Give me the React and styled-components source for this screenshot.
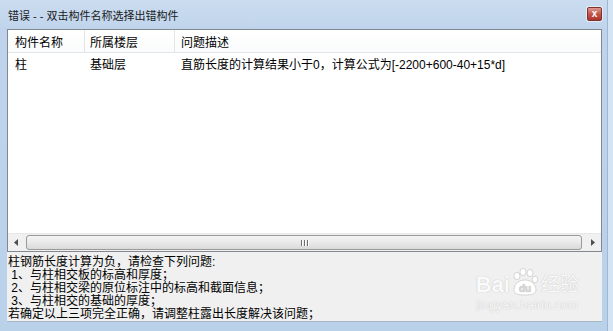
import React from "react";
import styled, { createGlobalStyle } from "styled-components";

const GlobalStyle = createGlobalStyle`
  html, body {
    margin: 0;
    padding: 0;
    background: #d4e4f4;
  }
  body {
    font-family: "Liberation Sans", "Noto Sans CJK SC", sans-serif;
    font-size: 12px;
    color: #000;
  }
`;

const StyledWindow = styled.div`
  position: relative;
  display: flex;
  flex-direction: column;

  width: 608px;
  height: 331px;
  box-sizing: border-box;
  padding: 0 5px 9px 7px;

  background: linear-gradient(180deg, #cbdcef 0%, #bfd4ec 30px, #bad1ea 100%);
  border-right: 1px solid #9fb7d2;
`;

const StyledTitleBar = styled.div`
  display: flex;
  align-items: center;
  justify-content: space-between;

  height: 29px;
  padding-left: 1px;
  flex-shrink: 0;
`;

const StyledTitle = styled.span`
  font-size: 11px;
  color: #1b1b1b;
  white-space: pre;
`;

const StyledClose = styled.div`
  display: flex;
  align-items: center;
  justify-content: center;

  width: 13px;
  height: 12px;
  margin-bottom: 2px;

  border: 1px solid #7d322c;
  border-radius: 2px;
  background: linear-gradient(180deg, #dc9a92 0%, #c4544b 50%, #ab352d 100%);
  box-shadow: 0 0 0 1px rgba(255, 255, 255, 0.5);
  color: #fff;
  font-size: 10px;
  font-weight: bold;
  line-height: 1;
`;

const StyledList = styled.div`
  display: flex;
  flex-direction: column;

  height: 223px;
  box-sizing: border-box;
  flex-shrink: 0;

  border: 1px solid #828790;
  background: #fff;
`;

const StyledRow = styled.div`
  display: grid;
  grid-template-columns: 77px 90px 1fr;
  align-items: center;

  height: ${(p) => (p.$header ? "22px" : "20px")};
  border-bottom: ${(p) => (p.$header ? "1px solid #e5e5e5" : "none")};
  background: ${(p) =>
    p.$header ? "linear-gradient(180deg, #ffffff 0%, #fafbfc 100%)" : "#fff"};
`;

const StyledCell = styled.div`
  height: 100%;
  display: flex;
  align-items: center;
  padding-left: ${(p) => p.$pad || 6}px;
  white-space: nowrap;
  border-right: ${(p) => (p.$divider ? "1px solid #e5e5e5" : "none")};
  font-size: 12px;
`;

const StyledSpacer = styled.div`
  flex: 1;
`;

const StyledScrollbar = styled.div`
  display: flex;
  align-items: center;

  height: 17px;
  background: #f0f0f0;
  border-top: 1px solid #e8e8e8;
`;

const StyledArrow = styled.div`
  display: flex;
  align-items: center;
  justify-content: center;
  width: 17px;
  height: 17px;
  flex-shrink: 0;
`;

const StyledThumb = styled.div`
  display: flex;
  align-items: center;
  justify-content: center;

  flex: 1;
  height: 15px;
  margin: 0 2px 0 1px;
  box-sizing: border-box;

  border: 1px solid #9a9a9a;
  border-radius: 3px;
  background: linear-gradient(180deg, #f4f4f4 0%, #e9e9e9 50%, #d9d9d9 100%);
`;

const StyledGrip = styled.div`
  display: flex;
  gap: 2px;

  span {
    width: 1px;
    height: 6px;
    background: #6f6f6f;
    box-shadow: 1px 0 0 #fff;
  }
`;

const StyledDetail = styled.div`
  flex: 1;
  box-sizing: border-box;
  padding: 4px 0 0 1px;

  background: #f0f0f0;
  border-bottom: 1px solid #a9b6c6;
  font-size: 12px;
  line-height: 13px;
  white-space: pre;
  overflow: hidden;
`;

const StyledWatermark = styled.div`
  position: absolute;
  right: 28px;
  bottom: 20px;

  display: flex;
  flex-direction: column;
  align-items: center;
  color: rgba(255, 255, 255, 0.95);
  text-shadow: 0 0 1px rgba(150, 150, 150, 0.7);
  pointer-events: none;
`;

const StyledBrand = styled.div`
  display: flex;
  align-items: flex-end;
  font-family: "Liberation Sans", "Noto Sans CJK SC", sans-serif;
  font-size: 22px;
  font-weight: bold;
  line-height: 22px;
`;

const StyledBrandCjk = styled.span`
  font-size: 19px;
  font-weight: normal;
  margin-left: 1px;
`;

const StyledSite = styled.div`
  font-size: 12px;
  line-height: 12px;
  margin-top: 3px;
  letter-spacing: 0.3px;
`;

const Paw = () => (
  <svg width="30" height="28" viewBox="0 0 30 28">
    <g fill="rgba(255,255,255,0.95)" stroke="rgba(150,150,150,0.6)" strokeWidth="0.6">
      <ellipse cx="7" cy="8" rx="3" ry="3.6" />
      <ellipse cx="13" cy="4" rx="3" ry="3.6" />
      <ellipse cx="20" cy="5" rx="3" ry="3.6" />
      <ellipse cx="25" cy="11.5" rx="2.8" ry="3.3" />
      <path d="M4 22c0-6 5-10 11-10s11 4 11 10c0 4-4 5-11 5s-11-1-11-5z" />
    </g>
    <text x="15" y="24" fontSize="10" fontWeight="bold" textAnchor="middle" fill="#d6d6d6">du</text>
  </svg>
);

const LeftArrow = () => (
  <svg width="5" height="7" viewBox="0 0 5 7">
    <path d="M4 0 L0 3.5 L4 7 Z" fill="#505050" />
  </svg>
);

const RightArrow = () => (
  <svg width="5" height="7" viewBox="0 0 5 7">
    <path d="M1 0 L5 3.5 L1 7 Z" fill="#505050" />
  </svg>
);

const detailLines = [
  "柱钢筋长度计算为负，请检查下列问题:",
  " 1、与柱相交板的标高和厚度；",
  " 2、与柱相交梁的原位标注中的标高和截面信息；",
  " 3、与柱相交的基础的厚度；",
  "若确定以上三项完全正确，请调整柱露出长度解决该问题；",
];

const App = () => {
  return (
    <>
      <GlobalStyle />
      <StyledWindow>
        <StyledTitleBar>
          <StyledTitle>错误 - - 双击构件名称选择出错构件</StyledTitle>
          <StyledClose>x</StyledClose>
        </StyledTitleBar>
        <StyledList>
          <StyledRow $header>
            <StyledCell $pad={7} $divider>构件名称</StyledCell>
            <StyledCell $pad={5} $divider>所属楼层</StyledCell>
            <StyledCell>问题描述</StyledCell>
          </StyledRow>
          <StyledRow>
            <StyledCell $pad={7}>柱</StyledCell>
            <StyledCell $pad={5}>基础层</StyledCell>
            <StyledCell>直筋长度的计算结果小于0，计算公式为[-2200+600-40+15*d]</StyledCell>
          </StyledRow>
          <StyledSpacer />
          <StyledScrollbar>
            <StyledArrow>
              <LeftArrow />
            </StyledArrow>
            <StyledThumb>
              <StyledGrip>
                <span />
                <span />
                <span />
              </StyledGrip>
            </StyledThumb>
            <StyledArrow>
              <RightArrow />
            </StyledArrow>
          </StyledScrollbar>
        </StyledList>
        <StyledDetail>{detailLines.join("\n")}</StyledDetail>
        <StyledWatermark>
          <StyledBrand>
            Bai
            <Paw />
            <StyledBrandCjk>经验</StyledBrandCjk>
          </StyledBrand>
          <StyledSite>jingyan.baidu.com</StyledSite>
        </StyledWatermark>
      </StyledWindow>
    </>
  );
};

export default App;
